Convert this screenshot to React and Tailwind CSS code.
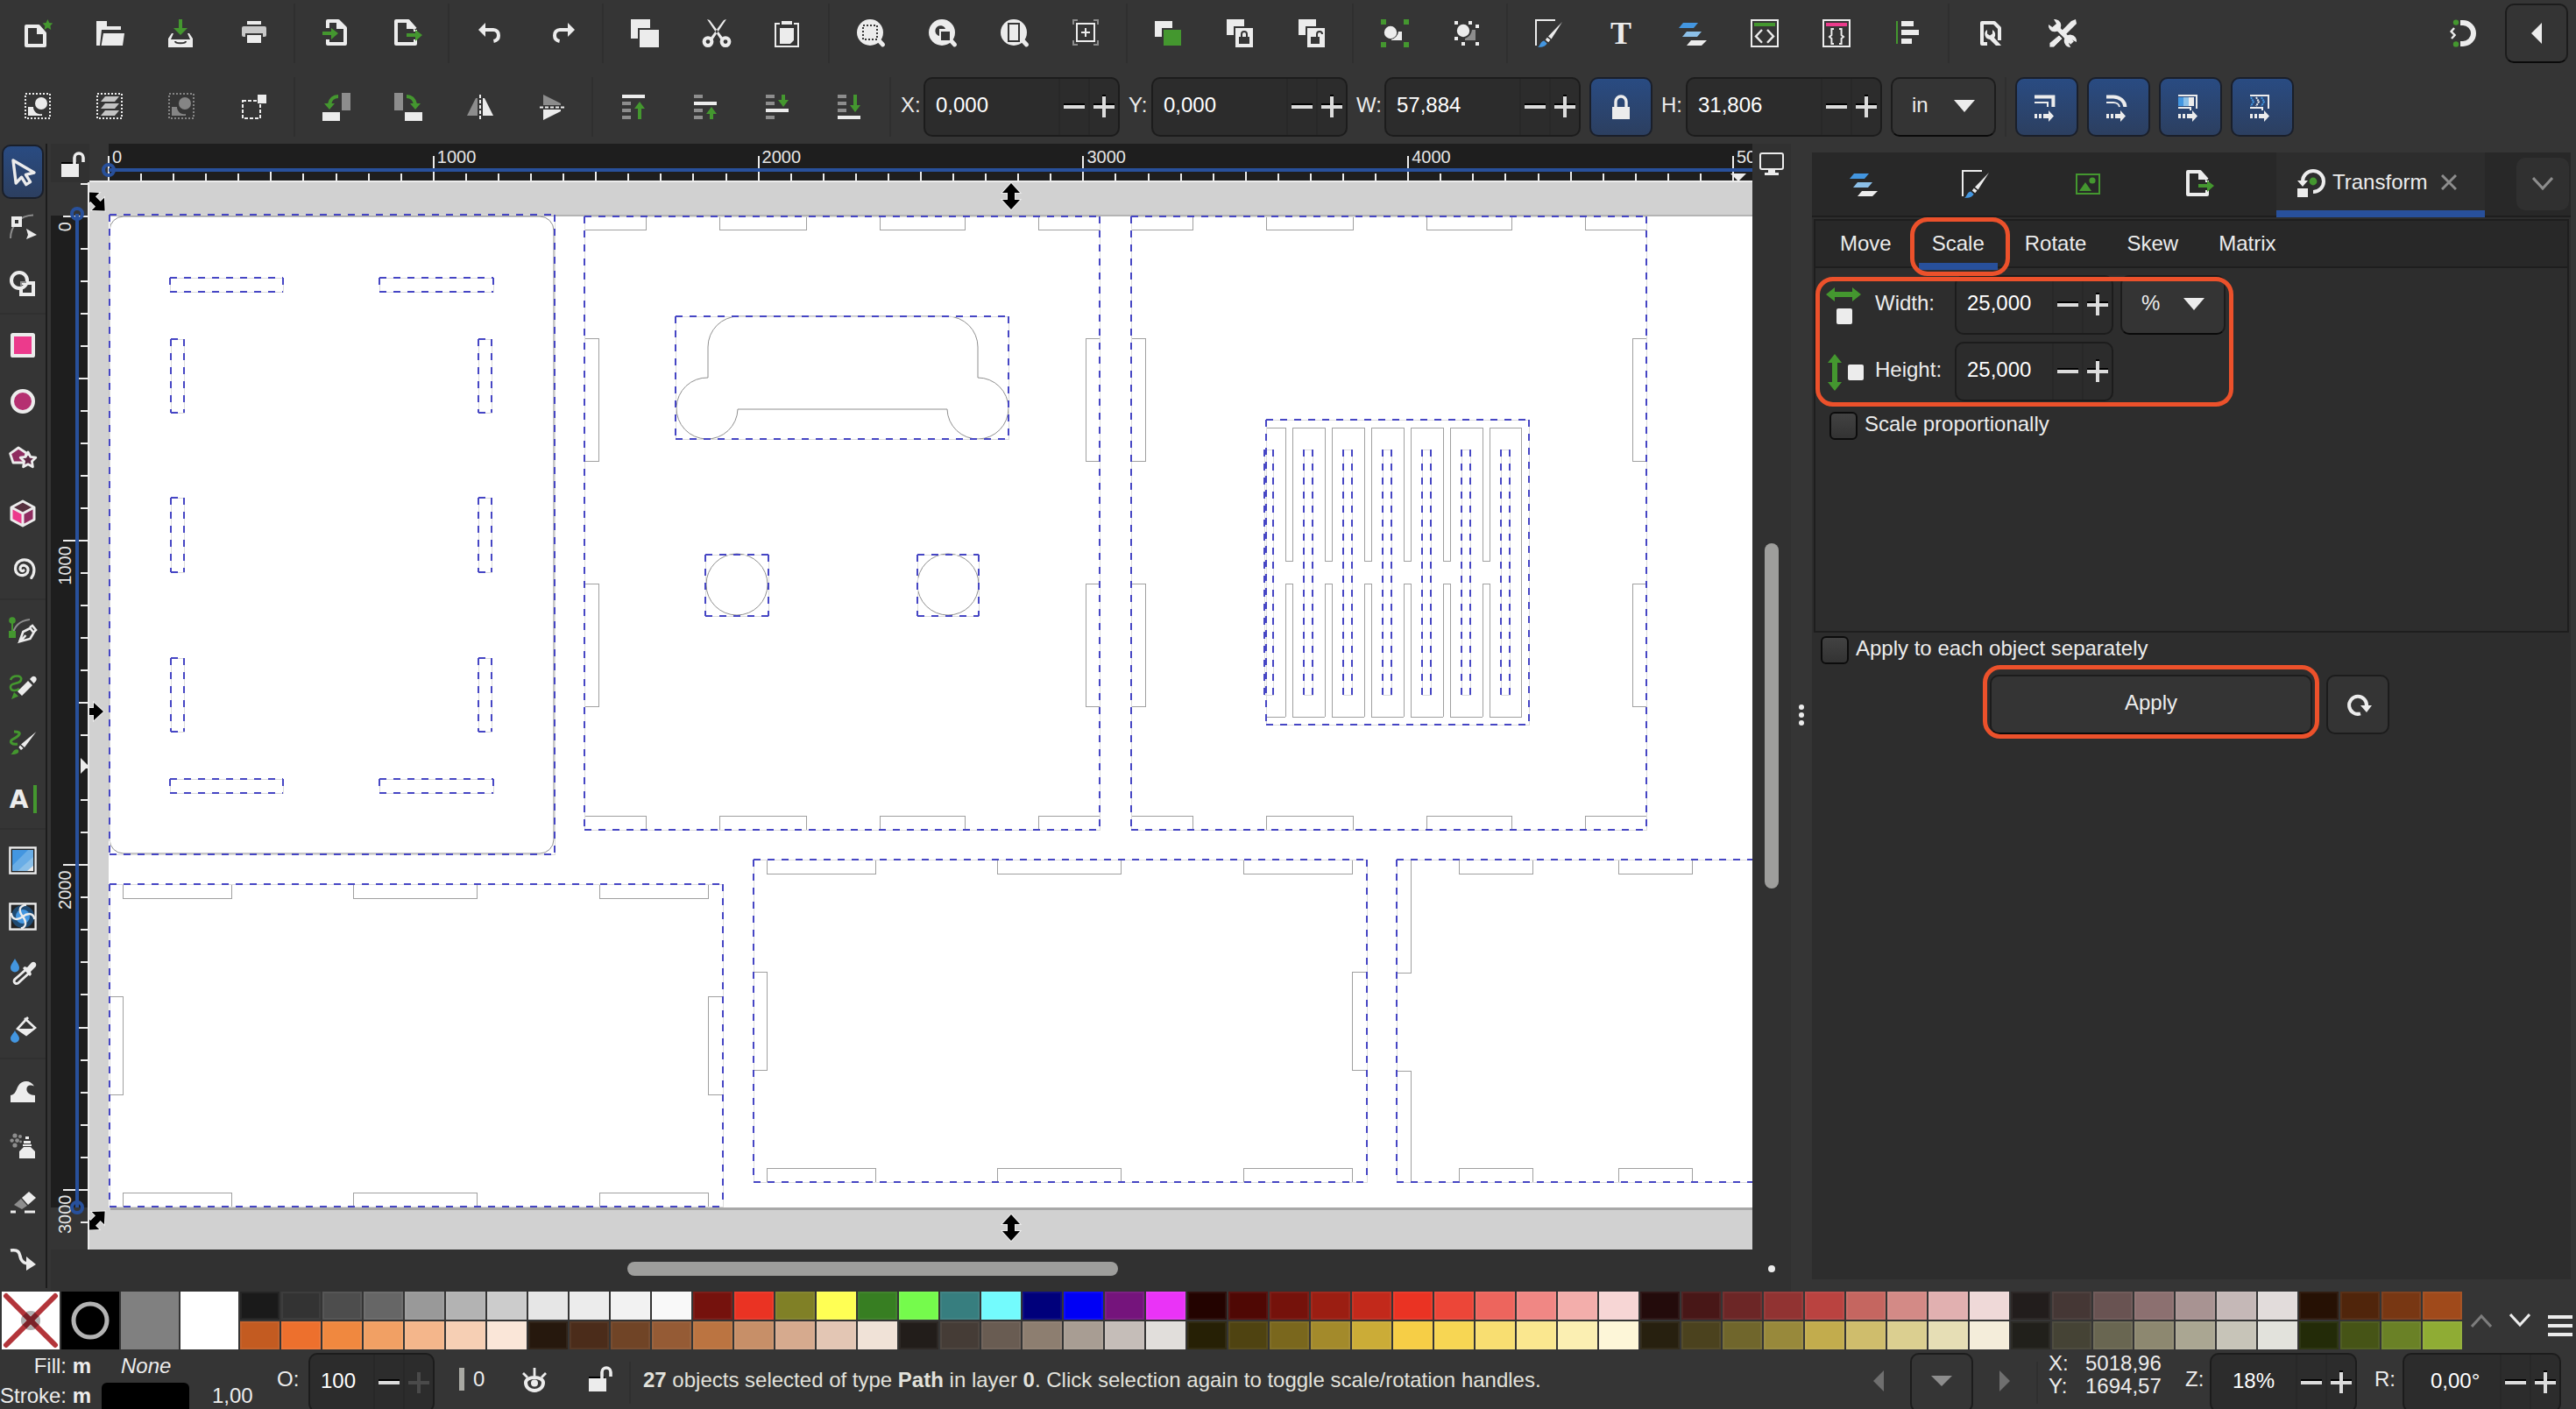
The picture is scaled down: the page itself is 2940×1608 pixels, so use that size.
import React from 'react';

const W = '#ececec';
const G = '#44972f';
const D = '#8d8d8d';
const BG = '#353535';
const BLUE = '#4396e0';
const SKY = '#8cc0e8';
const PINK = '#ec3a8c';

const line = { fill: 'none', stroke: W, strokeWidth: 2 };
const thin = { fill: 'none', stroke: W, strokeWidth: 1 };

const magnifier = (
  <>
    <circle cx="7.5" cy="7.5" r="7.5" fill={W} />
    <path d="M12 11.5l2.8 3" fill="none" stroke={W} strokeWidth="2.4" strokeLinecap="round" />
  </>
);

const brush = (
  <>
    <path d="M.5 15V.5h11" {...thin} />
    <path d="M15.500 1.500L9.300 11.200 7.500 9.800z" fill={W} />
    <path d="M6.900 10.400l1.800 1.400-1.100 1.300-1.700-1.400z" fill={W} />
    <path d="M5.100 12.200l1.700 1.600c-.8 1.700-2.600 2.200-5.300 2.200 1.500-1 1.400-3.300 3.600-3.800z" fill={BLUE} />
  </>
);

const layers = (
  <>
    <path d="M2.500 2H11L8.500 5H0z" fill={BLUE} />
    <path d="M4.500 7H13l-2.500 3H2z" fill={SKY} />
    <path d="M7 12h9l-3 3H4.500z" fill={W} />
  </>
);

const exportDoc = (
  <>
    <path d="M12 5.500L8 1H1v13h11v-2.500M12 6v1" {...line} strokeLinejoin="round" />
    <path d="M7 0v5.500h5.500z" fill={W} />
    <path d="M7 8h5V6l4 3-4 3.500V10H7z" fill={G} />
  </>
);

const stack = (white, arrow) => (
  <>
    {[2, 6, 10, 14].map((y) => (
      <rect key={y} x="1" y={y} width={y === white ? 13 : 5} height="2" fill={y === white ? W : D} />
    ))}
    <path d={arrow} fill={G} />
  </>
);

const dotted = (color) => (
  <rect x="0.5" y="1.5" width="14" height="14" fill="none" stroke={color} strokeDasharray="1 1" />
);

const moveArrow = (
  <path d="M0 12h1.500v2.500H0zM2.500 12H4v2.500H2.500zM5 12h3v-2l3 3.200-3 3.300v-2H5z" fill={W} />
);

const ICONS = {
  new: (
    <>
      <path d="M1 4h7l3.500 4v7H1z" {...line} strokeLinejoin="round" />
      <path d="M7 4v4.500h5z" fill={W} />
      <path d="M13.200 0l.9 2 2 .2-1.400 1.500.4 2.300-1.900-1.200L11.300 6l.4-2.300L10.300 2.200l2-.2z" fill={G} />
    </>
  ),
  open: <path d="M0 1h6v3h8v2H3L2 15H0zM4 8h12l-1 7H2.800z" fill={W} />,
  save: (
    <>
      <path d="M6 0h2v5h3L7 9 3 5h3z" fill={G} />
      <path d="M0 16v-5l2-3h1l-1.500 3.500h11L11 8h1l2 3v5z" fill={W} />
      <path d="M4 12.500c0 1.500 6 1.500 6 0" fill="none" stroke={BG} />
    </>
  ),
  print: (
    <>
      <path d="M4 1h8v2H4z" fill={W} />
      <rect x="1" y="4" width="14" height="6" rx="1" fill="#c8c8c8" />
      <path d="M3.500 8.500h9V14h-9z" fill={W} stroke={BG} />
    </>
  ),
  import: (
    <>
      <path d="M3 5V1h6l4 4v9H3v-2.500" {...line} strokeLinejoin="round" />
      <path d="M8 0v5.500h5.500z" fill={W} />
      <path d="M0 7h5V5l4 3-4 3.500V9H0z" fill={G} />
    </>
  ),
  export: exportDoc,
  undo: (
    <>
      <path d="M1 6l4-4v8z" fill={W} />
      <path d="M5 6h4.500a3 3 0 0 1 3 3.300c0 1.900-1.200 2.900-2.800 3.200" {...line} />
    </>
  ),
  redo: (
    <>
      <path d="M15 6l-4-4v8z" fill={W} />
      <path d="M11 6H6.500a3 3 0 0 0-3 3.300c0 1.900 1.200 2.900 2.800 3.200" {...line} />
    </>
  ),
  copy: <path d="M0 0h11v5H4v6H0zM5 6h11v10H5z" fill={W} />,
  cut: (
    <>
      <path d="M2.500 0L4 .5l7.500 10-1.300 1zM13.500 0L12 .5l-7.500 10 1.300 1z" fill={W} />
      <circle cx="3" cy="12.800" r="2.200" {...line} />
      <circle cx="13" cy="12.800" r="2.200" {...line} />
    </>
  ),
  paste: (
    <>
      <path d="M3 2.500H.5v13h13v-13H11" {...thin} />
      <path d="M4 1h6v2H4zM3 5h8v7l-2 2H3z" fill={W} />
    </>
  ),
  zoomSelection: (
    <>
      {magnifier}
      <rect x="3.5" y="3.5" width="8" height="8" fill="none" stroke={BG} strokeDasharray="1 1" />
    </>
  ),
  zoomDrawing: (
    <>
      {magnifier}
      <path d="M6 9.500A3 3 0 1 1 9.500 5.500H6z" fill={BG} />
      <path d="M7 7h5v5H7z" fill={BG} />
    </>
  ),
  zoomPage: (
    <>
      {magnifier}
      <rect x="4.5" y="2.5" width="6" height="10" fill="none" stroke={BG} />
    </>
  ),
  zoomCenter: (
    <>
      <path d="M.5 3V.5H3M12 .5h2.500V3M.5 12v2.500H3M12 14.500h2.500V12" fill="none" stroke={D} />
      <rect x="2.5" y="2.5" width="10" height="10" {...thin} />
      <path d="M5 7.500h5M7.500 5v5" {...thin} />
    </>
  ),
  duplicate: (
    <>
      <path d="M0 1h10v4H4v5H0z" fill={W} />
      <path d="M5 6h10v9H5z" fill={G} />
    </>
  ),
  clone: (
    <>
      <path d="M0 0h10v4H4v5H0zM5 5h10v11H5z" fill={W} />
      <path d="M7 10h6v4H7z" fill={BG} />
      <path d="M8.500 10V8.500a1.500 1.500 0 0 1 3 0V10" fill="none" stroke={BG} />
    </>
  ),
  unclone: (
    <>
      <path d="M0 0h10v4H4v5H0zM5 5h10v11H5z" fill={W} />
      <path d="M7 10h5v4H7z" fill={BG} />
      <path d="M10.500 10V8.500a1.500 1.500 0 0 1 3 0" fill="none" stroke={BG} />
    </>
  ),
  group: (
    <>
      <path d="M0 0h3v3H0zM13 0h3v3h-3zM0 13h3v3H0zM13 13h3v3h-3z" fill={G} />
      <path d="M6 12h6V7h-2a5 5 0 0 1-4 4.500z" fill={W} />
      <circle cx="5.500" cy="7.500" r="3.600" fill={W} />
    </>
  ),
  ungroup: (
    <>
      <path d="M1 1h2v2H1zM9 1h2v2H9zM13 3h2v2h-2zM1 10h2v2H1zM5 13h2v2H5zM13 13h2v2h-2z" fill={W} />
      <path d="M7 12h6V6h-2a6 6 0 0 1-4 5z" fill={D} />
      <circle cx="6" cy="6.500" r="3.600" fill={W} />
    </>
  ),
  fillStroke: brush,
  text: (
    <text x="8" y="14" textAnchor="middle" fontFamily="'Liberation Serif', serif" fontWeight="700" fontSize="18" fill={W}>T</text>
  ),
  layers,
  xml: (
    <>
      <rect x="0.5" y="0.5" width="15" height="15" {...thin} />
      <path d="M2 2h12v2H2z" fill={G} />
      <path d="M6.500 6L3 9.700l3.500 3.700M9.500 6L13 9.700l-3.500 3.700" {...thin} strokeWidth="1.200" />
    </>
  ),
  css: (
    <>
      <rect x="0.5" y="0.5" width="15" height="15" {...thin} />
      <path d="M2 2h12v2H2z" fill={PINK} />
      <path d="M6.500 5.500H5.200V9L4 10l1.200 1v3h1.300M9.500 5.500h1.300V9l1.200 1-1.200 1v3H9.500" {...thin} />
    </>
  ),
  align: (
    <>
      <path d="M1 1h1v13H1z" fill={G} />
      <path d="M4 1h7v3H4zM4 6h10v3H4zM4 11h6v3H4z" fill={W} />
    </>
  ),
  docProps: (
    <>
      <path d="M6 14H3V2h7l3 3v7" {...line} strokeLinejoin="round" />
      <path d="M6 6v2.200l1.500 1L9 8.200V6a3 3 0 0 1 1 4.500L14 15h-3L7.500 11.500A3 3 0 0 1 6 6z" fill={W} />
    </>
  ),
  prefs: (
    <>
      <path d="M4 4l9.500 9.500" fill="none" stroke={W} strokeWidth="2.600" />
      <path d="M3 0a3.600 3.600 0 1 1-3 3l2.200 1.500L4.500 2.500z" fill={W} />
      <path d="M16 13a3.600 3.600 0 1 0-3.400 3l-1.100-2.200 2-2z" fill={W} />
      <path d="M15.500 0L16 2.500 9 9.500 6.800 7.300 13 1z" fill={W} />
      <path d="M6 9l2 2-5 5H.5v-2.500z" fill={W} stroke={BG} strokeWidth=".4" />
    </>
  ),
  snap: (
    <>
      <path d="M6.500 2H8a6 6 0 0 1 0 12H6.500" fill="none" stroke={W} strokeWidth="3" />
      <circle cx="4" cy="1.800" r="1.600" fill={G} />
      <circle cx="4" cy="14.200" r="1.600" fill={G} />
      <path d="M3 5L1.300 7l2 2-1.800 2" fill="none" stroke={W} strokeWidth="1.200" />
    </>
  ),
  selectAll: (
    <>
      {dotted(W)}
      <path d="M2 9h3a4 4 0 0 0 5 4v1H2z" fill={W} />
      <circle cx="9.500" cy="7" r="3.500" fill={W} />
    </>
  ),
  selectLayers: (
    <>
      {dotted(W)}
      <path d="M5 3h8l-2.500 3h-8zM5 7h8l-2.500 3h-8zM5 11h8l-2.500 3h-8z" fill="#c4c4c4" />
    </>
  ),
  deselect: (
    <>
      {dotted('#858585')}
      <path d="M2 9h3a4 4 0 0 0 5 4v1H2z" fill="#858585" />
      <circle cx="9.500" cy="7" r="3.500" fill="#858585" />
    </>
  ),
  selectTouch: (
    <>
      <rect x="1.5" y="5.5" width="10" height="10" {...thin} strokeDasharray="2 1" />
      <path d="M10 2h5v5h-5z" fill={W} />
    </>
  ),
  rotateLeft: (
    <>
      <path d="M11 1h5v10h-5z" fill={D} />
      <path d="M0 12h10v5H0z" fill={W} />
      <path d="M9 3C6 3 4.500 5 4 7.500" fill="none" stroke={G} strokeWidth="2" />
      <path d="M1 7h6l-3 3.500z" fill={G} />
    </>
  ),
  rotateRight: (
    <>
      <path d="M0 1h5v10H0z" fill={D} />
      <path d="M6 12h10v5H6z" fill={W} />
      <path d="M7 3c3 0 4.500 2 5 4.500" fill="none" stroke={G} strokeWidth="2" />
      <path d="M9 7h6l-3 3.500z" fill={G} />
    </>
  ),
  flipH: (
    <>
      <path d="M.5 14h6V4h-1z" fill={D} />
      <path d="M15.500 14h-6V4h1z" fill={W} />
      <path d="M8 2v14" {...thin} strokeDasharray="2 1" />
    </>
  ),
  flipV: (
    <>
      <path d="M3 2v6h10V7z" fill={D} />
      <path d="M3 16.500v-6h10v1z" fill={W} />
      <path d="M1 9.300h14" {...thin} strokeDasharray="2 1" />
    </>
  ),
  raiseTop: stack(2, 'M11 6l3 4h-2v6h-2v-6H8z'),
  raise: stack(6, 'M11 9l3 4h-2v3h-2v-3H8z'),
  lower: stack(10, 'M10 2h2v3h2l-3 4-3-4h2z'),
  lowerBottom: stack(14, 'M10 2h2v6h2l-3 4-3-4h2z'),
  scaleStroke: (
    <>
      <path d="M0 2.200h10.700V8" {...line} strokeWidth="2" />
      <path d="M0 5.500h7.500V8" {...thin} />
      {moveArrow}
    </>
  ),
  scaleCorners: (
    <>
      <path d="M0 2.200h4a6.700 6 0 0 1 6.700 5.800" {...line} strokeWidth="2" />
      <path d="M0 5.500h4A3.500 3 0 0 1 7.500 8" {...thin} />
      {moveArrow}
    </>
  ),
  moveGradient: (
    <>
      <path d="M0 1.500h10.500V9M0 8.500h7V10" {...thin} />
      <path d="M0 2.500h3v5H0z" fill={BLUE} />
      <path d="M3 2.500h3v5H3z" fill={SKY} />
      <path d="M6 2.500h3v5H6z" fill={W} />
      {moveArrow}
    </>
  ),
  movePattern: (
    <>
      <path d="M0 1.500h10.500V9M0 8.500h7V10" {...thin} />
      <path d="M.5 2.500L2 5 .5 7.500M6.500 2.500L8 5 6.500 7.500" fill="none" stroke={BLUE} strokeDasharray="1 .4" />
      <path d="M3.500 2.500L5 5 3.500 7.500" {...thin} strokeDasharray="1 .4" />
      {moveArrow}
    </>
  ),
  lock: (
    <>
      <path d="M2 8h10v7H2z" fill={W} />
      <path d="M4 8.500V5a3 3 0 0 1 6 0v3.500" {...line} strokeWidth="1.700" />
    </>
  ),
  unlock: (
    <>
      <path d="M1 6.500h9v1H1z" fill="#000" />
      <path d="M1 7.500h10V15H1z" fill={W} />
      <path d="M8.500 7.500V4a2.500 2.500 0 0 1 5 0v2.500" {...line} strokeWidth="1.800" />
    </>
  ),
  eye: (
    <>
      <path d="M3 10c0-4 10-4 10 0a5 4.500 0 0 1-10 0z" {...line} />
      <circle cx="8" cy="10.200" r="2" fill={W} />
      <path d="M8 6V1.500M4 7L1.500 4.500M12 7l2.500-2.500" {...thin} strokeWidth="1.400" />
    </>
  ),
  monitor: (
    <>
      <rect x="1.500" y="1.500" width="13" height="9" rx="1" {...thin} />
      <path d="M6 11h4v1.500h2V14H4v-1.500h2z" fill={W} />
    </>
  ),
  select: <path d="M2.500 1.500l12 7-4.800 1.200 2.600 4.100-2.400 1.500-2.600-4.200-3.200 3.400z" {...line} strokeWidth="1.700" strokeLinejoin="round" />,
  node: (
    <>
      <path d="M1 14C1 7 6 1 14 .8" fill="none" stroke={D} />
      <path d="M2.500 2.500h4v4h-4z" fill={BG} stroke={W} strokeWidth="2" />
      <path d="M10 8.500l6 3.500-6 2.500 1-2.500z" fill={W} />
    </>
  ),
  shapeBuilder: (
    <>
      <path d="M7.500 7.500H14v6.500H7V9.500" {...line} />
      <circle cx="6" cy="6" r="4.500" {...line} />
      <path d="M7 9V7h3" fill="none" stroke={D} />
    </>
  ),
  rect: <rect x="2" y="2" width="12" height="12" rx=".3" fill={PINK} stroke={W} strokeWidth="2" strokeLinejoin="round" />,
  circle: <circle cx="8" cy="8" r="6" fill="#b53071" stroke={W} strokeWidth="2" />,
  star: (
    <>
      <path d="M5.500 2.500L10 5.500 8.500 11H2.500L.8 5.800z" fill="#8f2c60" stroke={W} strokeWidth="1.400" strokeLinejoin="round" />
      <path d="M11 5l1.400 2.700 3 .4-2.200 2.100.5 3.200-2.700-1.500-2.700 1.500.5-3.200L6.600 8.100l3-.4z" fill="#5c2743" stroke={W} strokeWidth="1.400" strokeLinejoin="round" />
    </>
  ),
  box: (
    <>
      <path d="M8 1l6.500 3.500v7L8 15l-6.500-3.500v-7z" fill="#57303f" />
      <path d="M1.500 4.500L8 8v7l-6.500-3.500z" fill={PINK} />
      <path d="M8 8l6.500-3.500v7L8 15z" fill="#8f2c60" />
      <path d="M8 1l6.500 3.500v7L8 15l-6.500-3.500v-7zM1.500 4.500L8 8l6.500-3.500M8 8v7" {...line} strokeWidth="1.500" strokeLinejoin="round" />
    </>
  ),
  spiral: <path d="M8.500 8.500c-.8.6-2 .1-2-1C6.500 6 8 5.200 9.300 5.700c1.700.6 2.200 2.600 1.300 4.100-1.200 1.800-3.600 2-5.300.8-2-1.500-2-4.500-.4-6.400 2-2.300 5.700-2.400 7.800-.3 2.400 2.400 2.200 6.400.2 8.800" {...line} strokeWidth="1.600" strokeLinecap="round" />,
  pen: (
    <>
      <path d="M2 11C3 5 7 2 12 1.500" fill="none" stroke={D} />
      <circle cx="2" cy="2" r="1.900" fill={G} />
      <path d="M1.500 2h1v7h-1zM0 8h4v4H0z" fill={G} />
      <path d="M6 14.500l2.200-6 4-2 2 2.500-2 3.500-5.500 1.500 3-3.500M12 6l1.500-1 2 2.500-1.300 1.300" {...line} strokeWidth="1.300" />
    </>
  ),
  pencil: (
    <>
      <path d="M1 4c1-3 7-3 6 0S1 5 1 8s4 2 5 1" fill="none" stroke={G} strokeWidth="1.300" />
      <path d="M3 11l2.500 2.200L1.500 15z" fill={G} />
      <path d="M5 10.500l6-6 2.500 2.500-6 6zM12 3.500l1.200-1.200c1.500-1.200 3.500.8 2.300 2.300L14.300 6z" fill={W} />
    </>
  ),
  calligraphy: (
    <>
      <path d="M3 1.500c6 0 2 3-1 4.500-2 1.500 0 3 3 2.500" fill="none" stroke={G} strokeWidth="1.500" />
      <path d="M1 14.500c1.500-.5 1.500-3.500 4.300-2.700 1.500 2.200-2 3-4.300 2.700z" fill={G} />
      <path d="M15.700 1.500L9 10.500 7 8.700zM6.500 9.300l1.800 1.700-1.300 1-1.300-1.500z" fill={W} />
    </>
  ),
  textTool: (
    <>
      <text x="5.800" y="13" textAnchor="middle" fontFamily="'DejaVu Sans', sans-serif" fontWeight="700" fontSize="14" fill={W}>A</text>
      <path d="M14 0h2v16h-2z" fill={G} />
    </>
  ),
  gradient: (
    <>
      <rect x=".7" y=".7" width="14.600" height="14.600" fill="#222" stroke={W} strokeWidth="1.200" />
      <path d="M2 2h12v12H2z" fill={BLUE} />
      <path d="M14 2v12H2v-3L11 2z" fill="#69ade6" />
      <path d="M14 6v8H5z" fill={SKY} />
      <path d="M14 11v3h-3.500z" fill={W} />
    </>
  ),
  mesh: (
    <>
      <rect x=".7" y=".7" width="14.600" height="14.600" fill="#222" stroke={W} strokeWidth="1.200" />
      <circle cx="8" cy="8" r="6.500" fill="#1f4a72" />
      <circle cx="8" cy="8" r="4" fill={BLUE} />
      <path d="M10 1.300C5 2 6 5.500 8 8s2.500 6-1 6.700M1.300 6C2 10.500 5.500 10 8 8s6-2.500 6.700 1.500" {...thin} strokeWidth="1.200" />
    </>
  ),
  dropper: (
    <>
      <path d="M3.500 0C4.500 2 6 3.500 6 5.200a2.500 2.500 0 0 1-5 0C1 3.500 2.500 2 3.500 0z" fill={BLUE} />
      <path d="M9.500 6.500L3.300 12c-.8 1.500.5 2.700 2 2l6-5.500" {...thin} strokeWidth="1.400" />
      <path d="M8 5.500l1-1L10.500 5 13 2.300c1.500-1.300 3.500.7 2.300 2.300L12.500 7.500l.5 1.500-1 1z" fill={W} />
    </>
  ),
  bucket: (
    <>
      <path d="M3.500 9C4.500 11 6 12 6 13.500a2.500 2.500 0 0 1-5 0C1 12 2.500 11 3.500 9z" fill={BLUE} />
      <path d="M9 2l6 5.500-5 4-5-3.500L11 1.500" {...thin} strokeWidth="1.300" />
      <path d="M5 8h10l-5 4z" fill={W} />
    </>
  ),
  tweak: <path d="M1 15v-4c3-.5 3-3 4.500-5.500 2-3.300 7-3.500 9 .3-2.500-1.200-4.300-.3-4.300 1.700s2 3.500 4.800 3.500v4z" fill={W} />,
  spray: (
    <>
      <path d="M6 15V11l2.500-2.500h4L15 11v4zM8.500 5h4v1.500h-4zM9.500 2.500h2V4h-2zM8 7h5v1H8z" fill={W} />
      <g fill={D}>
        <circle cx="3.500" cy="2" r="1.300" />
        <circle cx="6.500" cy="2.500" r="1" />
        <circle cx="1.800" cy="4.800" r="1.100" />
        <circle cx="4.800" cy="4.800" r="1.200" />
        <circle cx="3.500" cy="7.500" r="1.300" />
        <circle cx="6.800" cy="5.500" r=".7" />
      </g>
    </>
  ),
  eraser: (
    <>
      <path d="M7.500 5.500L11.500 2 15.500 5.500 11 9.500z" fill={W} />
      <path d="M7 6l3.500 4L7.500 12 3 9.500z" fill={D} />
      <path d="M1 13.500h3M9 13.500h6" {...line} strokeWidth="1.400" />
    </>
  ),
  connector: (
    <>
      <path d="M1 3.500c6-1 5 3 6 5s2 2.500 4 2.500" {...line} strokeWidth="1.800" />
      <path d="M10 7l5.500 4.500L10 15z" fill={W} />
    </>
  ),
  picture: (
    <>
      <rect x="1.500" y="2.500" width="13" height="11" fill="none" stroke={G} />
      <path d="M3 12l3.500-5L10 12z" fill={G} />
      <circle cx="10.500" cy="6" r="1.800" fill={G} />
    </>
  ),
  transform: (
    <>
      <path d="M3 7.500a6 6 0 1 1 6 6" {...line} />
      <path d="M0 7h6l-3 3.500z" fill={W} />
      <path d="M0 11.500h6v5H0z" fill={W} />
      <circle cx="9" cy="7.500" r="2.200" fill={G} />
    </>
  ),
  scaleX: (
    <>
      <path d="M-2 2l5-4v2.500h10V-2l5 4-5 4V3.500H3V6z" fill={G} />
      <rect x="4" y="10" width="9" height="9" rx="1" fill={W} />
    </>
  ),
  scaleY: (
    <>
      <path d="M3-2l4 5H4.500v11H7l-4 5-4-5h2.500V3H-1z" fill={G} />
      <rect x="10.500" y="4" width="9" height="9" rx="1" fill={W} />
    </>
  ),
  reset: (
    <>
      <path d="M9.500 13.200A5 5 0 1 1 13 9" {...line} />
      <path d="M9.500 8.500H16L13 12.500z" fill={W} />
    </>
  ),
};

const Icon = ({ name }) => (
  <svg className="w-8 h-8 shrink-0 overflow-visible" viewBox="0 0 16 16" aria-hidden="true">
    {ICONS[name]}
  </svg>
);

const COMMANDS = [
  ['new', 'open', 'save', 'print'],
  ['import', 'export'],
  ['undo', 'redo'],
  ['copy', 'cut', 'paste'],
  ['zoomSelection', 'zoomDrawing', 'zoomPage', 'zoomCenter'],
  ['duplicate', 'clone', 'unclone'],
  ['group', 'ungroup'],
  ['fillStroke', 'text', 'layers', 'xml', 'css', 'align'],
  ['docProps', 'prefs'],
];

const SELECT_ACTIONS = [
  ['selectAll', 'selectLayers', 'deselect', 'selectTouch'],
  ['rotateLeft', 'rotateRight', 'flipH', 'flipV'],
  ['raiseTop', 'raise', 'lower', 'lowerBottom'],
];

const TOOLS = [
  ['select', 'node', 'shapeBuilder'],
  ['rect', 'circle', 'star', 'box', 'spiral'],
  ['pen', 'pencil', 'calligraphy', 'textTool'],
  ['gradient', 'mesh', 'dropper', 'bucket'],
  ['tweak', 'spray', 'eraser', 'connector'],
];

const PALETTE = [
  '#1a1a1a #333333 #4d4d4d #666666 #999999 #b3b3b3 #cccccc #e6e6e6 #ececec #f2f2f2 #f9f9f9 #75120d #ea3323 #808026 #ffff54 #377e22 #75fb4c #377e7f #73fbfd #00007b #0000f5 #75147c #ea33f7 #230300 #4f0804 #75120b #9b1e12 #c2291b #ea3323 #ec4638 #ed655d #f08784 #f3aeab #f7d6d5 #230b0b #481717 #6c2626 #913332 #ba4340 #c56660 #d38a86 #e1b0b0 #efd9d8 #221d1c #453735 #695352 #8c7070 #a89392 #c5b8b7 #e2dcdb #261104 #50250b #783713 #a04a1b',
  '#c35b21 #ed702d #f0883f #f1a064 #f4b68b #f6cfb4 #fae6d8 #26180d #4b2c1a #704426 #955b35 #bb7441 #c78f68 #d6aa8e #e3c6b4 #f0e2d7 #221d1a #453c36 #695c52 #8d7e70 #a89d93 #c5bdb8 #e1dedb #262005 #4f4311 #7a671d #a38a2b #cbac37 #f6ce46 #f7d653 #f8de71 #fae78f #fbefb2 #fdf6d8 #27200f #4b421e #70662c #98893b #c2ac4d #cfbd6c #dbcf90 #e6deb5 #f4edda #21201b #454335 #696651 #8d8870 #aaa692 #c7c4b8 #e2e2dc #232b08 #465416 #6a8126 #8fac34',
].join(' ').split(' ');

const Separator = () => <div className="w-[2px] h-[68px] mx-[5px] shrink-0 bg-[#2f2f2f]" />;

const IconGroups = ({ groups, trailing, buttonClass = '' }) =>
  groups.map((group, index) => (
    <React.Fragment key={index}>
      {index > 0 && <Separator />}
      {group.map((name) => (
        <button key={name} aria-label={name} className={`w-[82px] h-[68px] shrink-0 flex items-center justify-center pl-[2px] ${buttonClass}`}>
          <Icon name={name} />
        </button>
      ))}
      {trailing && index === groups.length - 1 && <Separator />}
    </React.Fragment>
  ));

const Minus = () => (
  <svg className="w-6 h-7" viewBox="0 0 24 28" aria-hidden="true">
    <path d="M0 10h24v2H0z" fill="#000" />
    <path d="M0 12h24v4H0z" fill="#dcdcdc" />
  </svg>
);

const Plus = ({ dim }) => (
  <svg className="w-6 h-7" viewBox="0 0 24 28" aria-hidden="true">
    {!dim && <path d="M0 10h24v2H0zM10 0h4v2h-4z" fill="#000" />}
    <path d="M0 12h24v4H0zM10 2h4v24h-4z" fill={dim ? '#4a4a4a' : '#dcdcdc'} />
  </svg>
);

const Spin = ({ id, value, className, inputClass = 'pl-3', dimPlus }) => (
  <div className={`h-[68px] shrink-0 flex rounded-[10px] border-2 border-[#1c1c1c] bg-[#2c2c2c] ${className}`}>
    <input id={id} defaultValue={value} className={`flex-1 min-w-0 bg-transparent text-white outline-none pb-1 ${inputClass}`} />
    <button aria-label="Decrease" className="w-[34px] shrink-0 flex items-center justify-center border-l-2 border-[#282828]">
      <Minus />
    </button>
    <button aria-label="Increase" className="w-[34px] shrink-0 flex items-center justify-center border-l-2 border-[#282828]">
      <Plus dim={dimPlus} />
    </button>
  </div>
);

const UnitSelect = ({ label, value, className = '' }) => (
  <div className={`relative h-[68px] w-[120px] shrink-0 ${className}`}>
    <select
      aria-label={label}
      defaultValue={value}
      className="w-full h-full appearance-none rounded-[10px] border-2 border-[#1c1c1c] border-b-[#0a0a0a] bg-[#343434] pl-[22px] pb-1"
    >
      <option>{value}</option>
    </select>
    <svg className="absolute right-6 top-[26px] w-6 h-[14px] pointer-events-none" viewBox="0 0 24 14" aria-hidden="true">
      <path d="M0 0h24L12 14z" fill={W} />
    </svg>
  </div>
);

const Toggle = ({ name }) => (
  <button
    aria-label={name}
    aria-pressed="true"
    className="w-[72px] h-[68px] shrink-0 flex items-center justify-center pl-1 rounded-[10px] border-2 border-[#1a1f2a] bg-linear-to-b from-[#294b82] to-[#2c3f60]"
  >
    <Icon name={name} />
  </button>
);

const Tick = ({ id, children, className }) => (
  <div className={`flex items-center gap-2 ${className}`}>
    <input
      id={id}
      type="checkbox"
      className="appearance-none w-8 h-8 rounded-md border-2 border-[#0c0c0c] bg-linear-to-b from-[#424242] to-[#333333]"
    />
    <label htmlFor={id} className="leading-7 pb-1">{children}</label>
  </div>
);

const Chevron = ({ up, color }) => (
  <svg className="w-6 h-4" viewBox="0 0 24 16" aria-hidden="true">
    <path d={up ? 'M1 15L12 3l11 12' : 'M1 1l11 12L23 1'} fill="none" stroke={color} strokeWidth="3" />
  </svg>
);

// Ruler unit is 1000 per 370.6px, zero at the page corner
const tickRange = Array.from({ length: 55 }, (_, i) => i - 2);

const HorizontalRuler = () => (
  <svg className="w-full h-full block bg-[#1e1e1e]" aria-hidden="true">
    <path d="M0 0h22v42H0z" fill={BG} />
    {tickRange.filter((n) => n >= 0).map((n) => {
      const x = Math.round(22 + n * 37.08);
      const top = n % 10 === 0 ? 14 : n % 5 === 0 ? 32 : 34;
      return <path key={n} d={`M${x} ${top}V42`} stroke={W} strokeWidth="2" />;
    })}
    <path d="M22 30H1898" stroke="#28509b" strokeWidth="4" />
    {[0, 1000, 2000, 3000, 4000, 5000].map((n) => (
      <text key={n} x={26 + n * 0.3708} y="22" fontSize="20" fill="#e6e6e6">{n}</text>
    ))}
    <circle cx="22" cy="30" r="6" fill="none" stroke="#28509b" strokeWidth="4" />
    <path d="M1873 34h18l-9 9z" fill={W} />
    <path d="M0 43H1898" stroke={W} strokeWidth="2" />
  </svg>
);

const VerticalRuler = () => (
  <svg className="w-full h-full block bg-[#353535]" aria-hidden="true">
    <path d="M0 38h42v1132H0z" fill="#1e1e1e" />
    {tickRange.slice(1, 34).map((n) => {
      const y = Math.round(39 + n * 37.02);
      const left = n % 10 === 0 ? 14 : n % 5 === 0 ? 32 : 34;
      return <path key={n} d={`M${left} ${y}H42`} stroke={W} strokeWidth="2" />;
    })}
    <path d="M30 36V1170" stroke="#28509b" strokeWidth="4" />
    {[0, 1000, 2000, 3000].map((n) => (
      <text key={n} transform={`translate(23 ${45 + n * 0.3702}) rotate(-90)`} textAnchor="end" fontSize="20" fill="#e6e6e6">{n}</text>
    ))}
    <circle cx="30" cy="36" r="6" fill="none" stroke="#28509b" strokeWidth="4" />
    <circle cx="30" cy="1170" r="6" fill="none" stroke="#28509b" strokeWidth="4" />
    <path d="M34 657v18l9-9z" fill={W} />
    <path d="M43 0V1218" stroke={W} strokeWidth="2" />
  </svg>
);

const dash = { fill: 'none', stroke: '#4646c4', strokeWidth: 2, strokeDasharray: '8 8' };
const curve = { fill: 'none', stroke: '#8f8f8f', strokeWidth: 1 };
const cutLine = { fill: 'none', stroke: '#a0a0a0', strokeWidth: 1, shapeRendering: 'crispEdges' };

const Box = ({ x, y, x2, y2 }) => (
  <>
    <rect x={x} y={y} width={x2 - x} height={y2 - y} {...cutLine} stroke="#dddddd" />
    <path d={`M${x} ${y}H${x2}M${x} ${y}V${y2}M${x} ${y2}H${x2}M${x2} ${y}V${y2}`} {...dash} />
  </>
);

const slots = [
  [194, 317, 323, 333], [433, 317, 563, 333], [194, 889, 323, 905], [433, 889, 563, 905],
  [195, 387, 210, 471], [195, 568, 210, 653], [195, 751, 210, 835],
  [546, 387, 561, 471], [546, 568, 561, 653], [546, 751, 561, 835],
];

const fingers = [0, 1, 2, 3, 4, 5];

const TallSide = () => (
  <>
    <path
      d="M667 262H737V247M821 247V262H920V247M1004 247V262H1101V247M1185 247V262H1255M667 931H737V947M821 947V931H920V947M1004 947V931H1101V947M1185 947V931H1255M667 386H683V526H667M667 666H683V806H667M1255 386H1239V526H1255M1255 666H1239V806H1255"
      {...cutLine}
    />
    <Box x={667} y={247} x2={1255} y2={947} />
  </>
);

const WideSide = () => (
  <>
    <path
      d="M140 1009V1025H264V1009M403 1009V1025H544V1009M684 1009V1025H808V1009M140 1377V1361H264V1377M403 1377V1361H544V1377M684 1377V1361H808V1377M125 1137H140V1249H125M825 1137H808V1249H825"
      {...cutLine}
    />
    <Box x={125} y={1009} x2={825} y2={1377} />
  </>
);

const Handle = ({ x, y, angle = 0 }) => (
  <path
    transform={`translate(${x} ${y}) rotate(${angle})`}
    d="M0-15L10-4H4V4H10L0 15-10 4H-4V-4H-10z"
    fill="#000"
    stroke={W}
    strokeWidth="2"
    paintOrder="stroke"
  />
);

const Canvas = () => (
  <svg className="w-full h-full block bg-[#d1d1d1]" role="img" aria-label="Drawing">
    <g transform="translate(-102 -208)">
      <path d="M126 1378H2100v3H126z" fill="#a8a8a8" />
      <path d="M124 246H2100V1378H124z" fill="#fff" />
      <path d="M124 246H2100" stroke="#b4b4b4" strokeWidth="2" />
      <rect x="125" y="247" width="507" height="727" rx="16" {...curve} />
      <Box x={125} y={245} x2={633} y2={975} />
      {slots.map(([x, y, x2, y2]) => (
        <Box key={`${x}-${y}`} x={x} y={y} x2={x2} y2={y2} />
      ))}

      <TallSide />
      <path
        d="M808 431V396A35 35 0 0 1 843 361H1081A35 35 0 0 1 1116 396V431A35 35 0 1 1 1081 467H842A35 35 0 1 1 808 431"
        {...curve}
      />
      <Box x={771} y={361} x2={1151} y2={501} />
      <circle cx="841" cy="667" r="35" {...curve} />
      <Box x={805} y={633} x2={877} y2={703} />
      <circle cx="1082" cy="667" r="35" {...curve} />
      <Box x={1047} y={633} x2={1117} y2={703} />

      <g transform="translate(624 0)"><TallSide /></g>
      <path
        d={`M1445 488H1467${fingers.map((k) => `M${1467 + k * 45} 488V640H${1475 + k * 45}V488H${1512 + k * 45}M${1467 + k * 45} 818V666H${1475 + k * 45}V818H${1512 + k * 45}`).join('')}M1445 818H1467M1736 488V818`}
        {...cutLine}
      />
      {[...fingers, 6].map((k) => (
        <g key={k}>
          <rect x={1443 + k * 45} y="513" width="10" height="280" {...cutLine} stroke="#dddddd" />
          <path d={`M${1443 + k * 45} 513V793M${1453 + k * 45} 513V793`} {...dash} />
        </g>
      ))}
      <Box x={1445} y={479} x2={1745} y2={827} />

      <WideSide />
      <g transform="translate(735 -28)"><WideSide /></g>
      <path
        d="M1665 981V997H1749V981M1847 981V997H1931V981M1665 1349V1333H1749V1349M1847 1349V1333H1931V1349M1610 981V1110H1594M1594 1222H1610V1349"
        {...cutLine}
      />
      <Box x={1594} y={981} x2={2300} y2={1349} />

      <Handle x={1154} y={224} />
      <Handle x={1154} y={1401} />
      <Handle x={103} y={812} angle={90} />
      <Handle x={109} y={230} angle={-45} />
      <Handle x={109} y={1393} angle={45} />
    </g>
  </svg>
);

const Outline = ({ className }) => (
  <div className={`absolute pointer-events-none border-[5px] border-[#ec512b] rounded-[20px] ${className}`} />
);

const Toolbars = () => (
  <header className="h-[164px] shrink-0 overflow-hidden">
    <div className="h-[82px] pl-[2px] pr-[9px] pt-1 flex items-start">
      <IconGroups groups={COMMANDS} />
      <button aria-label="snap" className="ml-auto mr-8 w-8 h-[68px] flex items-center justify-center">
        <Icon name="snap" />
      </button>
      <button aria-label="Snap options" className="w-[72px] h-[68px] flex items-center justify-center rounded-[10px] border-2 border-[#1c1c1c] border-b-[#0a0a0a] bg-[#343434]">
        <svg className="w-3 h-6" viewBox="0 0 12 24" aria-hidden="true"><path d="M12 0v24L0 12z" fill={W} /></svg>
      </button>
    </div>
    <div className="h-[82px] pl-[2px] pt-[6px] flex items-start">
      <IconGroups groups={SELECT_ACTIONS} trailing buttonClass="pb-1" />
      <div className="flex items-center gap-[10px] pl-[6px]">
        {[
          ['X', '0,000', 'w-[26px]'],
          ['Y', '0,000', 'w-[26px]'],
          ['W', '57,884', 'w-[32px]'],
        ].map(([name, value, width]) => (
          <div key={name} className="flex items-center">
            <label htmlFor={name} className={`${width} pb-1`}>{name}:</label>
            <Spin id={name} value={value} className="w-[224px]" />
          </div>
        ))}
        <Toggle name="lock" />
        <div className="flex items-center">
          <label htmlFor="H" className="w-[28px] pb-1">H:</label>
          <Spin id="H" value="31,806" className="w-[224px]" />
        </div>
        <UnitSelect label="Units" value="in" />
        <div className="w-[2px] h-[68px] bg-[#2f2f2f]" />
        {['scaleStroke', 'scaleCorners', 'moveGradient', 'movePattern'].map((name) => (
          <Toggle key={name} name={name} />
        ))}
      </div>
    </div>
  </header>
);

const Toolbox = () => (
  <nav className="w-[54px] shrink-0 mb-1 pt-[1px] border-r-2 border-[#1c1c1c]">
    {TOOLS.map((group, index) => (
      <div key={index} className={`flex flex-col gap-[2px] ${index > 0 ? 'mt-[2px] border-t-2 border-[#303030] pt-1' : ''}`}>
        {group.map((name) => (
          <button
            key={name}
            aria-label={name}
            className={`w-[48px] h-[62px] ml-[2px] flex items-center justify-center rounded-[10px] ${
              name === 'select' ? 'border-2 border-[#1a1f2a] bg-linear-to-b from-[#294b82] to-[#2c3f60]' : ''
            }`}
          >
            <Icon name={name} />
          </button>
        ))}
      </div>
    ))}
  </nav>
);

const Workspace = () => (
  <main className="flex-1 min-w-0 ml-1 grid grid-cols-[44px_minmax(0,1fr)_44px] grid-rows-[44px_minmax(0,1fr)_48px] bg-[#313131]">
    <button aria-label="Lock guides" className="flex items-center justify-center pt-1 pl-2"><Icon name="unlock" /></button>
    <HorizontalRuler />
    <button aria-label="Display mode" className="flex items-center justify-center pt-1"><Icon name="monitor" /></button>
    <VerticalRuler />
    <div className="min-h-0 overflow-hidden"><Canvas /></div>
    <div className="flex justify-center pt-[412px]">
      <div className="w-4 h-[394px] rounded-full bg-[#9e9e9c]" />
    </div>
    <div />
    <div className="pl-[614px] pt-[14px]">
      <div className="w-[560px] h-4 rounded-full bg-[#9e9e9c]" />
    </div>
    <div className="flex justify-center pt-[18px]">
      <div className="w-2 h-2 rounded-full bg-[#ececec]" />
    </div>
  </main>
);

const TransformPanel = () => (
  <aside className="w-[866px] shrink-0 mt-[10px] mb-[14px] mr-[6px] bg-[#2d2d2d]">
    <div className="h-[74px] flex bg-[#282828] border-b-2 border-[#1e1e1e]">
      <div className="flex gap-[10px]">
        {['layers', 'fillStroke', 'picture', 'export'].map((name) => (
          <button key={name} aria-label={`${name} dialog`} className="w-[118px] flex items-center justify-center">
            <Icon name={name} />
          </button>
        ))}
      </div>
      <div className="h-[74px] w-[238px] ml-7 flex items-center pt-[2px] pl-6 gap-2 bg-[#2d2d2d] border-b-8 border-[#28509b]">
        <Icon name="transform" />
        <span>Transform</span>
        <button aria-label="Close" className="ml-2">
          <svg className="w-[18px] h-[18px]" viewBox="0 0 18 18" aria-hidden="true">
            <path d="M1 1l16 16M17 1L1 17" stroke="#8d8d8d" strokeWidth="3" />
          </svg>
        </button>
      </div>
      <button aria-label="Dialogs" className="ml-auto mr-[2px] mt-[6px] w-[60px] h-[60px] rounded-[10px] flex items-center justify-center bg-[#303030]">
        <Chevron color="#8d8d8d" />
      </button>
    </div>

    <div className="relative mt-[2px] mx-[2px] h-[472px] border-2 border-[#1e1e1e]">
      <div className="h-[54px] pl-[13px] flex gap-4 bg-[#282828] border-b-2 border-[#1e1e1e]">
        {['Move', 'Scale', 'Rotate', 'Skew', 'Matrix'].map((tab) => (
          <button key={tab} className={`relative px-[15px] h-14 ${tab === 'Scale' ? 'border-b-8 border-[#28509b] pt-[4px]' : 'pb-1'}`}>
            {tab}
            {tab === 'Scale' && <Outline className="-left-[10px] -right-[14px] -top-[4px] -bottom-[15px]" />}
          </button>
        ))}
      </div>
      <div className="pt-2 pl-3">
        <div className="flex items-center">
          <span className="w-[56px] pl-1"><Icon name="scaleX" /></span>
          <label htmlFor="scale-width" className="w-[91px] pb-1">Width:</label>
          <Spin id="scale-width" value="25,000" className="w-[181px]" />
          <UnitSelect label="Scale units" value="%" className="ml-2" />
        </div>
        <div className="flex items-center mt-2">
          <span className="w-[56px] pl-1"><Icon name="scaleY" /></span>
          <label htmlFor="scale-height" className="w-[91px] pb-1">Height:</label>
          <Spin id="scale-height" value="25,000" className="w-[181px]" />
        </div>
        <Tick id="proportional" className="mt-3 pl-1">Scale proportionally</Tick>
      </div>
      <Outline className="left-0 top-[64px] w-[477px] h-[148px]" />
    </div>

    <Tick id="each-object" className="mt-1 pl-[10px]">Apply to each object separately</Tick>
    <div className="flex mt-3 pl-[203px] gap-4">
      <div className="relative">
        <button className="w-[368px] h-[68px] pb-1 rounded-[10px] border-2 border-[#1c1c1c] border-b-[#0a0a0a] bg-[#343434]">Apply</button>
        <Outline className="-inset-x-2 -top-[11px] -bottom-[5px]" />
      </div>
      <button aria-label="Reset" className="w-[72px] h-[68px] flex items-center justify-center rounded-[10px] border-2 border-[#1c1c1c] bg-[#343434]">
        <Icon name="reset" />
      </button>
    </div>
  </aside>
);

const Palette = () => (
  <section className="h-[66px] shrink-0 flex pl-[2px] gap-[2px]">
    <button aria-label="No paint" className="w-[66px] bg-white">
      <svg className="w-full h-full" viewBox="0 0 66 66" aria-hidden="true">
        <circle cx="33" cy="33" r="11" fill="#b0b0b0" />
        <path d="M5 5l56 56M61 5L5 61" stroke="#b3353a" strokeWidth="6" strokeLinecap="round" />
        <path d="M26 26l14 14M40 26L26 40" stroke="#7a2228" strokeWidth="6" />
      </svg>
    </button>
    <button aria-label="Black" className="w-[66px] bg-black">
      <svg className="w-full h-full" viewBox="0 0 66 66" aria-hidden="true">
        <circle cx="33" cy="33" r="19" fill="none" stroke="#b3b3b3" strokeWidth="5" />
      </svg>
    </button>
    <button aria-label="Gray" className="w-[66px] bg-[#808080]" />
    <button aria-label="White" className="w-[66px] bg-white" />
    <div className="flex-1 grid grid-cols-[repeat(54,minmax(0,1fr))] grid-rows-2 gap-[2px]">
      {PALETTE.map((color, index) => (
        <button key={index} aria-label={color} className="border-2 border-white/5" style={{ backgroundColor: color }} />
      ))}
    </div>
    <div className="w-[128px] flex items-center gap-5 pl-2">
      <button aria-label="Scroll up"><Chevron up color="#7d7d7d" /></button>
      <button aria-label="Scroll down"><Chevron color={W} /></button>
      <button aria-label="Palette menu" className="pt-3">
        <svg className="w-7 h-6" viewBox="0 0 28 24" aria-hidden="true">
          <path d="M0 0h28v4H0zM0 10h28v4H0zM0 20h28v4H0z" fill={W} />
        </svg>
      </button>
    </div>
  </section>
);

const StatusBar = () => (
  <footer className="h-[68px] shrink-0 overflow-hidden flex items-start">
    <div className="w-[304px] grid grid-cols-[104px_112px_1fr] gap-x-3 items-center">
      <span className="h-[34px] pt-[2px] text-right whitespace-nowrap leading-[34px]">Fill: <b>m</b></span>
      <span className="h-[34px] pt-[2px] pl-[22px] italic leading-[34px]">None</span>
      <span />
      <span className="h-[34px] pt-[2px] text-right whitespace-nowrap leading-[34px]">Stroke: <b>m</b></span>
      <span className="w-[100px] h-[30px] mt-1 rounded-t-md bg-black" />
      <span className="h-[34px] pt-[2px] pl-[2px] leading-[34px]">1,00</span>
    </div>
    <div className="h-[68px] mt-1 flex items-center pl-3">
      <label htmlFor="opacity" className="w-[36px] pb-2">O:</label>
      <Spin id="opacity" value="100" className="w-[144px]" dimPlus />
      <span className="ml-7 w-[6px] h-[26px] mb-2 bg-[#a9a9a3]" />
      <span className="ml-[10px] w-[54px] pb-2">0</span>
      <button aria-label="Layer visible" className="mb-2"><Icon name="eye" /></button>
      <button aria-label="Layer unlocked" className="ml-11 mb-2"><Icon name="unlock" /></button>
      <div className="w-[2px] h-12 ml-4 mr-[14px] bg-[#2f2f2f]" />
    </div>
    <p className="pt-[20px] leading-[30px] whitespace-nowrap text-[#e2e2dc]">
      <b>27</b> objects selected of type <b>Path</b> in layer <b>0</b>. Click selection again to toggle scale/rotation handles.
    </p>
    <div className="ml-auto h-[68px] mt-1 pr-[17px] flex items-center">
      <button aria-label="Previous page" className="mb-1">
        <svg className="w-3 h-6" viewBox="0 0 12 24" aria-hidden="true"><path d="M12 0v24L0 12z" fill="#6f6f6f" /></svg>
      </button>
      <button aria-label="Pages" className="mx-[30px] w-[72px] h-[68px] pb-1 rounded-[10px] border-2 border-[#1c1c1c] flex items-center justify-center">
        <svg className="w-6 h-3" viewBox="0 0 24 12" aria-hidden="true"><path d="M0 0h24L12 12z" fill="#8d8d8d" /></svg>
      </button>
      <button aria-label="Next page" className="mb-1">
        <svg className="w-3 h-6" viewBox="0 0 12 24" aria-hidden="true"><path d="M0 0v24l12-12z" fill="#6f6f6f" /></svg>
      </button>
      <div className="w-[2px] h-12 ml-[30px] mr-3 bg-[#2f2f2f]" />
      <div className="w-[156px] mb-[18px] grid grid-cols-[42px_1fr] leading-[26px]">
        <span>X:</span><span>5018,96</span>
        <span>Y:</span><span>1694,57</span>
      </div>
      <label htmlFor="zoom" className="w-[28px] pb-2">Z:</label>
      <Spin id="zoom" value="18%" className="w-[168px]" inputClass="pl-6" />
      <label htmlFor="rotation" className="ml-5 w-[32px] pb-2">R:</label>
      <Spin id="rotation" value="0,00°" className="w-[181px]" inputClass="pl-[30px]" />
    </div>
  </footer>
);

const App = () => {
  return (
    <div className="h-screen flex flex-col overflow-hidden bg-[#353535] text-[#ececec] text-2xl font-['Liberation_Sans',Arial,sans-serif]">
      <Toolbars />
      <div className="flex-1 min-h-0 flex">
        <Toolbox />
        <Workspace />
        <div className="w-6 shrink-0 pt-[640px] flex flex-col items-center gap-[3px]">
          <span className="w-[6px] h-[6px] rounded-full bg-[#ececec]" />
          <span className="w-[6px] h-[6px] rounded-full bg-[#ececec]" />
          <span className="w-[6px] h-[6px] rounded-full bg-[#ececec]" />
        </div>
        <TransformPanel />
      </div>
      <Palette />
      <StatusBar />
    </div>
  );
};

export default App;
